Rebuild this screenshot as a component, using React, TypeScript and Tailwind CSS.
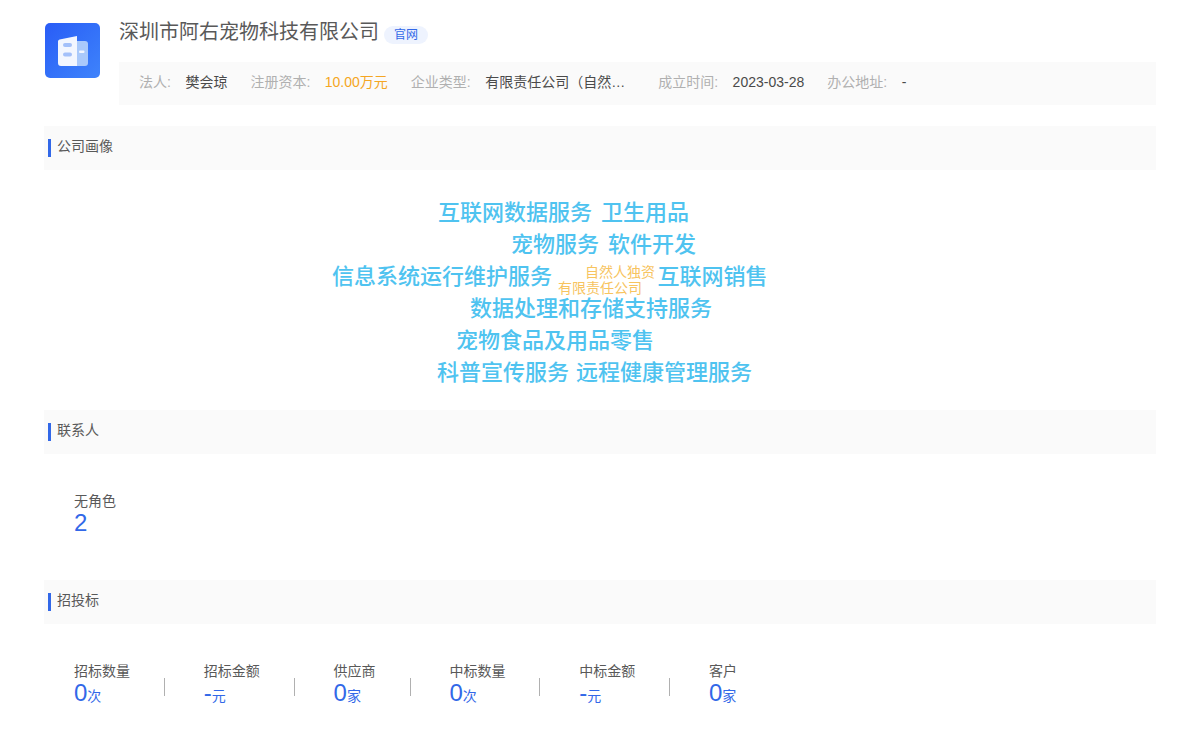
const infoItems = [
  { label: "法人:", value: "樊会琼", valueClass: "text-[#4a4a4a]" },
  { label: "注册资本:", value: "10.00万元", valueClass: "text-[#f5a623]" },
  { label: "企业类型:", value: "有限责任公司（自然人独资）", valueClass: "w-[150px] truncate text-[#4a4a4a]" },
  { label: "成立时间:", value: "2023-03-28", valueClass: "text-[#4a4a4a]" },
  { label: "办公地址:", value: "-", valueClass: "text-[#4a4a4a]" },
];

const cloudWords = [
  { text: "互联网数据服务", cls: "left-[394px] top-[28px] text-[22px] text-[#4fc3f0]" },
  { text: "卫生用品", cls: "left-[557px] top-[28px] text-[22px] text-[#4fc3f0]" },
  { text: "宠物服务", cls: "left-[467px] top-[60px] text-[22px] text-[#4fc3f0]" },
  { text: "软件开发", cls: "left-[564px] top-[60px] text-[22px] text-[#4fc3f0]" },
  { text: "信息系统运行维护服务", cls: "left-[288px] top-[92px] text-[22px] text-[#4fc3f0]" },
  { text: "自然人独资", cls: "left-[541px] top-[87px] text-[14px] font-normal text-[#f7c45f]" },
  { text: "有限责任公司", cls: "left-[514px] top-[103px] text-[14px] font-normal text-[#f7c45f]" },
  { text: "互联网销售", cls: "left-[613.5px] top-[92px] text-[22px] text-[#4fc3f0]" },
  { text: "数据处理和存储支持服务", cls: "left-[426px] top-[124px] text-[22px] text-[#4fc3f0]" },
  { text: "宠物食品及用品零售", cls: "left-[412px] top-[156px] text-[22px] text-[#4fc3f0]" },
  { text: "科普宣传服务", cls: "left-[393px] top-[188px] text-[22px] text-[#4fc3f0]" },
  { text: "远程健康管理服务", cls: "left-[532px] top-[188px] text-[22px] text-[#4fc3f0]" },
];

const bidStats = [
  { label: "招标数量", value: "0", unit: "次" },
  { label: "招标金额", value: "-", unit: "元" },
  { label: "供应商", value: "0", unit: "家" },
  { label: "中标数量", value: "0", unit: "次" },
  { label: "中标金额", value: "-", unit: "元" },
  { label: "客户", value: "0", unit: "家" },
];

function Logo() {
  return (
    <div className="flex h-[55px] w-[55px] shrink-0 items-center justify-center rounded-[5px] bg-gradient-to-br from-[#2a5cf6] to-[#3f83fb]">
      <svg width="30" height="30" viewBox="0 0 30 30" fill="none">
        <path d="M19 5h8a3 3 0 0 1 3 3v19a3 3 0 0 1-3 3h-8z" fill="#a9c9fb" />
        <path d="M0 5.5a2 2 0 0 1 1.6-2L19 0v30H3a3 3 0 0 1-3-3z" fill="#f2f6ff" />
        <rect x="5" y="7" width="9" height="4" rx="2" fill="#a3c0fa" />
        <rect x="5" y="16.5" width="9" height="4" rx="2" fill="#a3c0fa" />
        <rect x="21" y="14.5" width="5.5" height="2.5" rx="1" fill="#f2f6ff" />
      </svg>
    </div>
  );
}

function SectionHeader({ title }: { title: string }) {
  return (
    <div className="flex h-[44px] items-start bg-[#fafafa] pl-1 pt-[13px]">
      <span className="mr-[6px] h-[18px] w-[3px] bg-[#3268e8]" />
      <h2 className="text-[14px] leading-[14px] font-normal text-[#595959]">{title}</h2>
    </div>
  );
}

export default function App() {
  return (
    <div className="min-h-[752px] bg-white px-[44px] pt-[20px] font-['Liberation_Sans','Noto_Sans_CJK_SC',sans-serif] text-[14px]">
      <header className="flex h-[86px] gap-[19px]">
        <div className="pt-[3px] pl-[1px]">
          <Logo />
        </div>
        <div className="min-w-0 flex-1">
          <div className="flex h-[42px] items-start gap-[5px]">
            <h1 className="mt-[1px] text-[20px] leading-[22px] font-normal text-[#595959]">深圳市阿右宠物科技有限公司</h1>
            <a className="mt-[6px] flex h-[18px] items-center rounded-full bg-[#eef3fe] px-[10px] text-[12px] text-[#3268e8]">官网</a>
          </div>
          <div className="flex h-[43px] items-center gap-[23px] bg-[#fafafa] px-[20px] pb-[2px]">
            {infoItems.map((item) => (
              <div key={item.label} className="flex items-center gap-[14.5px]">
                <span className="text-[#b0b0b0]">{item.label}</span>
                <span className={item.valueClass}>{item.value}</span>
              </div>
            ))}
          </div>
        </div>
      </header>

      <section className="mt-[20px]">
        <SectionHeader title="公司画像" />
        <div className="relative h-[240px] font-medium">
          {cloudWords.map((word) => (
            <span key={word.text} className={`absolute leading-[30px] whitespace-nowrap ${word.cls}`}>
              {word.text}
            </span>
          ))}
        </div>
      </section>

      <section>
        <SectionHeader title="联系人" />
        <div className="h-[126px] pl-[30px] pt-[38px]">
          <p className="text-[14px] leading-[18px] text-[#595959]">无角色</p>
          <p className="text-[24px] leading-[26px] text-[#3268e8]">2</p>
        </div>
      </section>

      <section>
        <SectionHeader title="招投标" />
        <div className="flex pl-[30px] pt-[38px]">
          {bidStats.map((stat, i) => (
            <div key={stat.label} className="relative mr-[39.8px] pr-[34px]">
              <p className="leading-[18px] text-[#595959]">{stat.label}</p>
              <p className="leading-[26px] text-[#3268e8]">
                <span className="text-[24px]">{stat.value}</span>
                <span className="text-[14px]">{stat.unit}</span>
              </p>
              {i < bidStats.length - 1 && (
                <span className="absolute -right-px top-[16px] h-[18px] w-px bg-[#b0b0b0]" />
              )}
            </div>
          ))}
        </div>
      </section>
    </div>
  );
}
